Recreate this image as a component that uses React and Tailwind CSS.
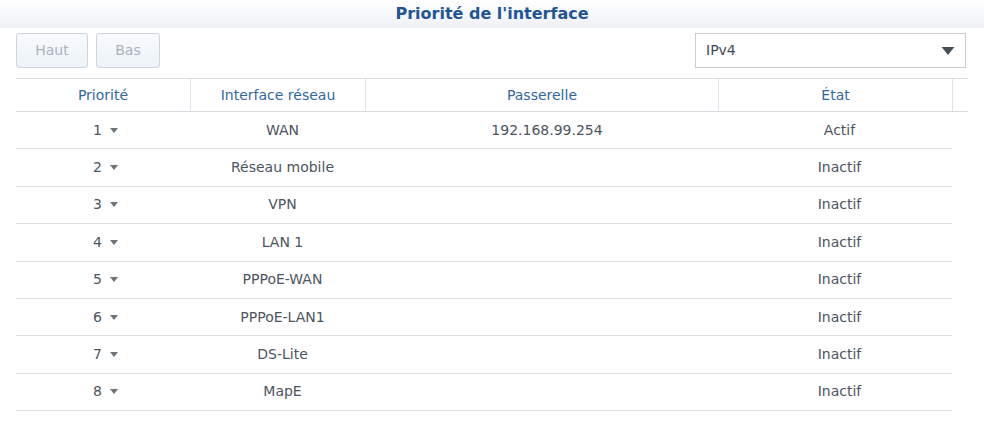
import React from "react";

const rows = [
  ["1", "WAN", "192.168.99.254", "Actif"],
  ["2", "Réseau mobile", "", "Inactif"],
  ["3", "VPN", "", "Inactif"],
  ["4", "LAN 1", "", "Inactif"],
  ["5", "PPPoE-WAN", "", "Inactif"],
  ["6", "PPPoE-LAN1", "", "Inactif"],
  ["7", "DS-Lite", "", "Inactif"],
  ["8", "MapE", "", "Inactif"],
];

function Caret({ className }) {
  return (
    <svg className={className} viewBox="0 0 8 5" width="8" height="5">
      <path d="M0 0 H8 L4 5 Z" fill="currentColor" />
    </svg>
  );
}

export default function App() {
  return (
    <div className="w-[984px] h-[426px] bg-white overflow-hidden" style={{ fontFamily: '"DejaVu Sans", Verdana, sans-serif' }}>
      <div className="h-[28px] bg-gradient-to-b from-white to-[#eef1f5] flex items-center justify-center">
        <span className="text-[16px] font-bold text-[#1f5596]">Priorité de l'interface</span>
      </div>
      <div className="flex items-center px-[16px] pt-[5px] h-[40px]">
        <div className="flex gap-[8px]">
          <button className="w-[72px] h-[35px] rounded-[3px] border border-[#c9d5e2] bg-gradient-to-b from-[#f8fafc] to-[#eef3f8] text-[14px] text-[#a9b3bd]">Haut</button>
          <button className="w-[64px] h-[35px] rounded-[3px] border border-[#c9d5e2] bg-gradient-to-b from-[#f8fafc] to-[#eef3f8] text-[14px] text-[#a9b3bd]">Bas</button>
        </div>
        <div className="ml-auto mr-[2px] w-[271px] h-[35px] border border-[#c8ced5] flex items-center pl-[10px] pr-[10px]">
          <span className="text-[14px] text-[#3f4a55]">IPv4</span>
          <Caret className="ml-auto w-[14px] h-[8px] text-[#474f57]" />
        </div>
      </div>
      <div className="mx-[16px] mt-[10px]">
        <div className="flex h-[34px] border-t border-b border-[#d9dde2] text-[14px] text-[#3167a0]">
          <div className="w-[175px] flex items-center justify-center border-r border-[#dde2ee]">Priorité</div>
          <div className="w-[175px] flex items-center justify-center border-r border-[#dde2ee]">Interface réseau</div>
          <div className="w-[353px] flex items-center justify-center border-r border-[#dde2ee]">Passerelle</div>
          <div className="w-[234px] flex items-center justify-center border-r border-[#dde2ee]">État</div>
          <div className="flex-1"></div>
        </div>
        <div className="w-[936px]">
          {rows.map((r) => (
            <div key={r[0]} className="flex h-[37.4px] border-b border-[#dde1e5] text-[14px] text-[#4c5560]">
              <div className="w-[175px] flex items-center justify-center gap-[8px] pl-[4px]">
                <span>{r[0]}</span>
                <Caret className="w-[8px] h-[5px] text-[#6b737b]" />
              </div>
              <div className="w-[175px] flex items-center justify-center pl-[8px]">{r[1]}</div>
              <div className="w-[353px] flex items-center justify-center pl-[9px]">{r[2]}</div>
              <div className="w-[233px] flex items-center justify-center pl-[8px]">{r[3]}</div>
            </div>
          ))}
        </div>
      </div>
    </div>
  );
}
